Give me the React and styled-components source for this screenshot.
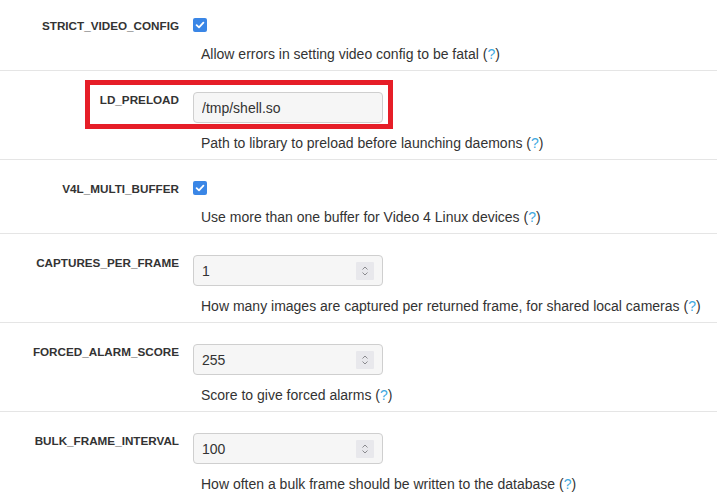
import React from "react";
import styled, { createGlobalStyle } from "styled-components";

const GlobalStyle = createGlobalStyle`
  html, body { margin: 0; padding: 0; background: #fff; overflow: hidden; }
  body {
    font-family: "Liberation Sans", Arial, Helvetica, sans-serif;
    color: #333;
  }
`;

const List = styled.div`
  margin-top: -3px;
`;

const Row = styled.div`
  position: relative;
  padding: 21px 0 6px;
  border-bottom: 1px solid #e5e5e5;
  &:last-child { border-bottom: none; }
`;

const Field = styled.div`
  display: grid;
  grid-template-columns: 179px 1fr;
  column-gap: 14px;
  align-items: start;
`;

const Label = styled.label`
  text-align: right;
  font-weight: bold;
  font-size: 11.7px;
  line-height: 16px;
  color: #333;
  text-transform: uppercase;
`;

const CheckWrap = styled.div`
  height: 16px;
`;

const Check = styled.span`
  display: block;
  width: 14px;
  height: 14px;
  border-radius: 2px;
  background: #3a86e6;
  display: flex;
  align-items: center;
  justify-content: center;
`;

const InputBox = styled.div`
  box-sizing: border-box;
  width: 190px;
  height: 31px;
  display: flex;
  align-items: center;
  border: 1px solid #cfcfcf;
  border-radius: 4px;
  background: #f6f6f6;
  padding: 0 8px;
`;

const TextInput = styled.input`
  flex: 1;
  min-width: 0;
  border: none;
  outline: none;
  background: transparent;
  padding: 0;
  font-family: "Liberation Sans", Arial, sans-serif;
  font-size: 14px;
  color: #333;
`;

const Spinner = styled.span`
  width: 18px;
  height: 18px;
  margin-top: 1px;
  background: #e8e8ec;
  border-radius: 1px;
  display: flex;
`;

const Help = styled.div`
  margin: 10px 0 0 201px;
  font-size: 14px;
  line-height: 20px;
  color: #333;
  white-space: nowrap;
`;

const HelpLink = styled.a`
  color: #3fa9df;
  text-decoration: none;
`;

const Highlight = styled.div`
  position: absolute;
  left: 85px;
  top: 9px;
  width: 308px;
  height: 49px;
  box-sizing: border-box;
  border: 5px solid #e61e28;
  pointer-events: none;
`;

const CheckIcon = () => (
  <svg width="10" height="10" viewBox="0 0 10 10">
    <path d="M1.6 5.2 L4 7.4 L8.4 2.6" fill="none" stroke="#fff" strokeWidth="1.8" strokeLinecap="round" strokeLinejoin="round" />
  </svg>
);

const SpinIcon = () => (
  <svg width="18" height="18" viewBox="0 0 18 18">
    <path d="M6.5 7.5 L9 5 L11.5 7.5" fill="none" stroke="#8a8a8e" strokeWidth="1" />
    <path d="M6.5 10.5 L9 13 L11.5 10.5" fill="none" stroke="#8a8a8e" strokeWidth="1" />
  </svg>
);

const rows = [
  { name: "STRICT_VIDEO_CONFIG", type: "check", help: "Allow errors in setting video config to be fatal" },
  { name: "LD_PRELOAD", type: "text", value: "/tmp/shell.so", help: "Path to library to preload before launching daemons", highlight: true },
  { name: "V4L_MULTI_BUFFER", type: "check", help: "Use more than one buffer for Video 4 Linux devices" },
  { name: "CAPTURES_PER_FRAME", type: "number", value: "1", help: "How many images are captured per returned frame, for shared local cameras" },
  { name: "FORCED_ALARM_SCORE", type: "number", value: "255", help: "Score to give forced alarms" },
  { name: "BULK_FRAME_INTERVAL", type: "number", value: "100", help: "How often a bulk frame should be written to the database" },
];

const Control = ({ row }) => {
  if (row.type === "check") {
    return (
      <CheckWrap>
        <Check><CheckIcon /></Check>
      </CheckWrap>
    );
  }
  return (
    <InputBox>
      <TextInput defaultValue={row.value} readOnly />
      {row.type === "number" && <Spinner><SpinIcon /></Spinner>}
    </InputBox>
  );
};

export default function App() {
  return (
    <>
      <GlobalStyle />
      <List>
        {rows.map((row) => (
          <Row key={row.name}>
            <Field>
              <Label>{row.name}</Label>
              <Control row={row} />
            </Field>
            <Help>
              {row.help} (<HelpLink href="#">?</HelpLink>)
            </Help>
            {row.highlight && <Highlight />}
          </Row>
        ))}
      </List>
    </>
  );
}
